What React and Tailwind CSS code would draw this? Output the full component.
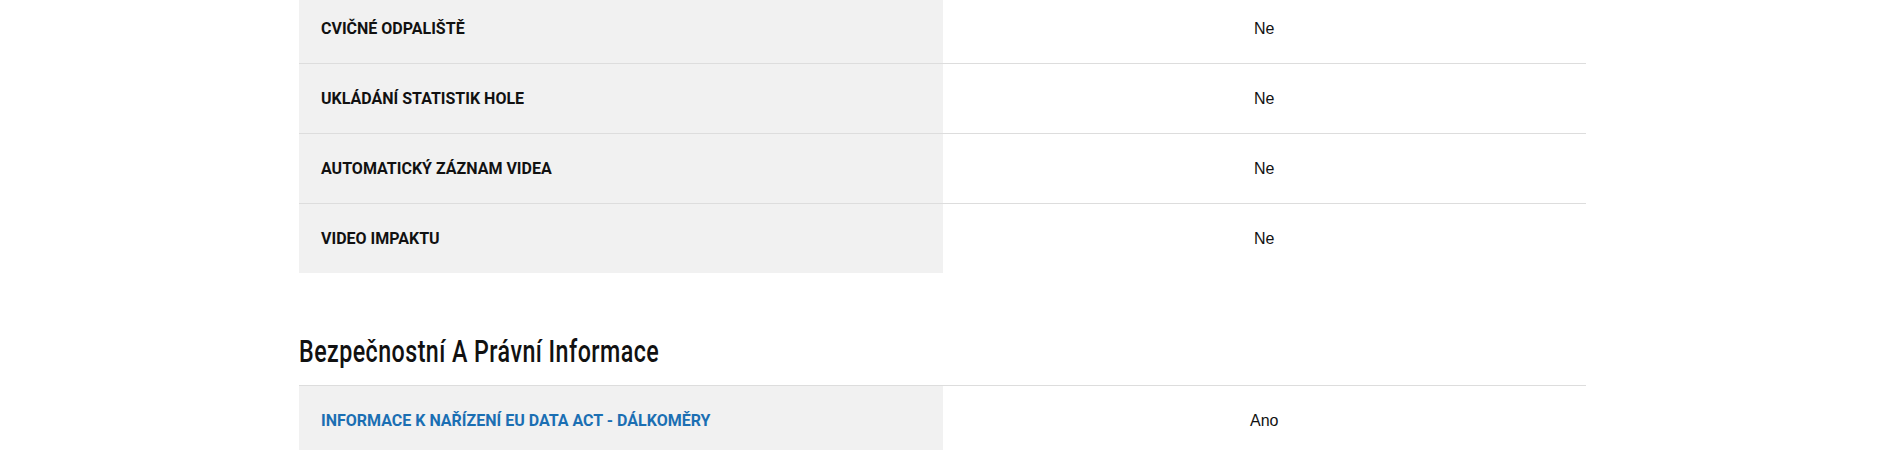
import React from "react";

const rows = [
  { label: "CVIČNÉ ODPALIŠTĚ", value: "Ne" },
  { label: "UKLÁDÁNÍ STATISTIK HOLE", value: "Ne" },
  { label: "AUTOMATICKÝ ZÁZNAM VIDEA", value: "Ne" },
  { label: "VIDEO IMPAKTU", value: "Ne" },
];

function Row({ label, value, first, link }) {
  return (
    <div className={"grid grid-cols-2 " + (first ? "" : "border-t border-[#dddddd]")}>
      <div className="h-[69px] bg-[#f1f1f1] flex items-center px-[22px]">
        <span
          className={
            "text-[16px] font-bold leading-none " + (link ? "text-[#1b6fb3]" : "text-[#111111]")
          }
          style={{ fontFamily: "Roboto, 'Liberation Sans', sans-serif" }}
        >
          {label}
        </span>
      </div>
      <div className="h-[69px] flex items-center justify-center">
        <span
          className="text-[16px] text-[#111111] leading-none"
          style={{ fontFamily: "'Liberation Sans', Arial, sans-serif" }}
        >
          {value}
        </span>
      </div>
    </div>
  );
}

export default function App() {
  return (
    <div className="w-full h-[450px] overflow-hidden bg-white pl-[299px] pr-[302px]">
      <div className="mt-[-6px]">
        {rows.map((r, i) => (
          <Row key={i} label={r.label} value={r.value} first={i === 0} />
        ))}
        <div className="h-[113px] flex items-end border-b border-[#dddddd] pb-[15px]">
          <h2
            className="text-[31px] font-medium leading-[36px] text-[#111111] tracking-[0.6px] origin-left scale-x-[0.75] whitespace-nowrap"
            style={{ fontFamily: "Roboto, 'Liberation Sans', sans-serif" }}
          >
            Bezpečnostní A Právní Informace
          </h2>
        </div>
        <Row label="INFORMACE K NAŘÍZENÍ EU DATA ACT - DÁLKOMĚRY" value="Ano" first link />
      </div>
    </div>
  );
}
